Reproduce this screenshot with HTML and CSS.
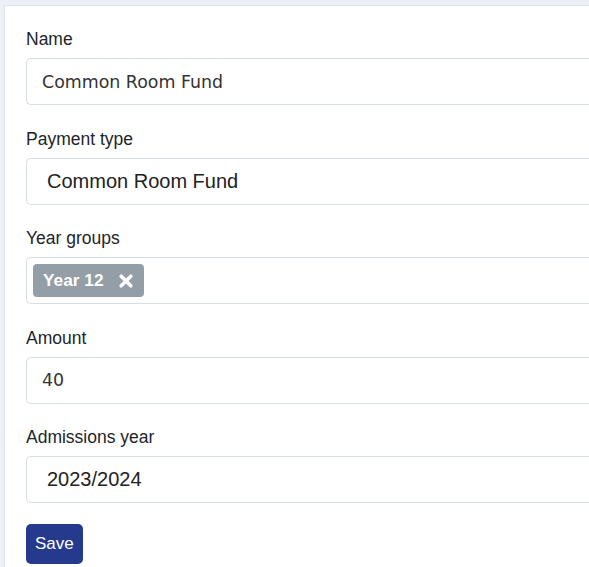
FILE: index.html
```html
<!DOCTYPE html>
<html lang="en">
<head>
<meta charset="utf-8">
<title>Payment</title>
<link rel="stylesheet" href="styles.css">
</head>
<body>
<div class="card">
  <form class="form">
    <div class="group">
      <label class="label">Name</label>
      <input class="control text" type="text" value="Common Room Fund">
    </div>
    <div class="group">
      <label class="label">Payment type</label>
      <div class="control select">Common Room Fund</div>
    </div>
    <div class="group">
      <label class="label">Year groups</label>
      <div class="control tags">
        <span class="tag">Year 12
          <svg class="tag-x" viewBox="0 0 14 14" width="14" height="14" aria-hidden="true">
            <path d="M2.2 2.2 L11.8 11.8 M11.8 2.2 L2.2 11.8" stroke="#fff" stroke-width="3.6" stroke-linecap="round"/>
          </svg>
        </span>
      </div>
    </div>
    <div class="group">
      <label class="label">Amount</label>
      <input class="control text" type="text" value="40">
    </div>
    <div class="group">
      <label class="label">Admissions year</label>
      <div class="control select">2023/2024</div>
    </div>
    <button class="btn" type="button">Save</button>
  </form>
</div>
</body>
</html>
```
FILE: styles.css
```css
html, body {
  margin: 0;
  padding: 0;
}
body {
  background: #eef0f8;
  overflow: hidden;
  font-family: "Liberation Sans", Arial, sans-serif;
  color: #212529;
  padding: 5px 0 0 4px;
  height: 100vh;
  box-sizing: border-box;
  display: flex;
}
.card {
  flex: 1;
  background: #fff;
  border-top: 1px solid #dde3ea;
  border-left: 1px solid #dde3ea;
  padding: 20px 0 0 21px;
  box-sizing: border-box;
}
.form {
  display: flex;
  flex-direction: column;
}
.group {
  display: flex;
  flex-direction: column;
  margin-bottom: 20.5px;
}
.label {
  font-size: 17.5px;
  line-height: 26px;
  margin-bottom: 6px;
  color: #212529;
}
.control {
  box-sizing: border-box;
  height: 47px;
  width: 100%;
  border: 1px solid #d6dfe6;
  border-right: none;
  border-radius: 5px 0 0 5px;
  background: #fff;
  margin: 0;
}
.text {
  font-family: "DejaVu Sans", sans-serif;
  font-size: 17.4px;
  color: #333;
  padding: 0 15px;
  outline: none;
}
.select {
  display: flex;
  align-items: center;
  font-family: "Liberation Sans", Arial, sans-serif;
  font-size: 20px;
  color: #222;
  padding: 0 20px;
}
.tags {
  display: flex;
  align-items: center;
  padding: 0 6px;
}
.tag {
  display: inline-flex;
  align-items: center;
  gap: 15px;
  height: 33px;
  box-sizing: border-box;
  padding: 0 11px 0 10px;
  background: #939ea6;
  color: #fff;
  border-radius: 4px;
  font-weight: bold;
  font-size: 17.3px;
}
.tag-x {
  display: block;
}
.btn {
  align-self: flex-start;
  height: 40px;
  padding: 0 9px;
  border: none;
  border-radius: 5px;
  background: #263a8d;
  color: #fff;
  font-family: "Liberation Sans", Arial, sans-serif;
  font-size: 17px;
  margin: 0;
}
```
